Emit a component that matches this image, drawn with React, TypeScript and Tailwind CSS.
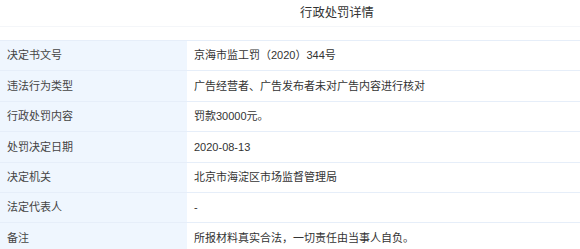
import React from "react";

type Row = { label: string; value: string };

const rows: Row[] = [
  { label: "决定书文号", value: "京海市监工罚（2020）344号" },
  { label: "违法行为类型", value: "广告经营者、广告发布者未对广告内容进行核对" },
  { label: "行政处罚内容", value: "罚款30000元。" },
  { label: "处罚决定日期", value: "2020-08-13" },
  { label: "决定机关", value: "北京市海淀区市场监督管理局" },
  { label: "法定代表人", value: "-" },
  { label: "备注", value: "所报材料真实合法，一切责任由当事人自负。" },
];

export default function App() {
  return (
    <div
      className="h-[249px] w-[580px] overflow-hidden bg-white text-[#333]"
      style={{ fontFamily: '"Liberation Sans", "Noto Sans CJK SC", sans-serif' }}
    >
      <div className="flex h-[27px] items-center justify-center border-b border-[#f4f6f9] pl-[94px] text-[12.3px] text-[#333]">
        行政处罚详情
      </div>

      <div className="mt-[13px] border-t border-[#e6eef9]">
        {rows.map((row) => (
          <div key={row.label} className="grid h-[30.4px] grid-cols-[187px_1fr] border-b border-[#e6eef9] text-[11px]">
            <div className="flex items-center bg-[#eff6fe] pl-[7px] text-[#444]">{row.label}</div>
            <div className="flex items-center pl-[7px] text-[#333]">{row.value}</div>
          </div>
        ))}
      </div>
    </div>
  );
}
